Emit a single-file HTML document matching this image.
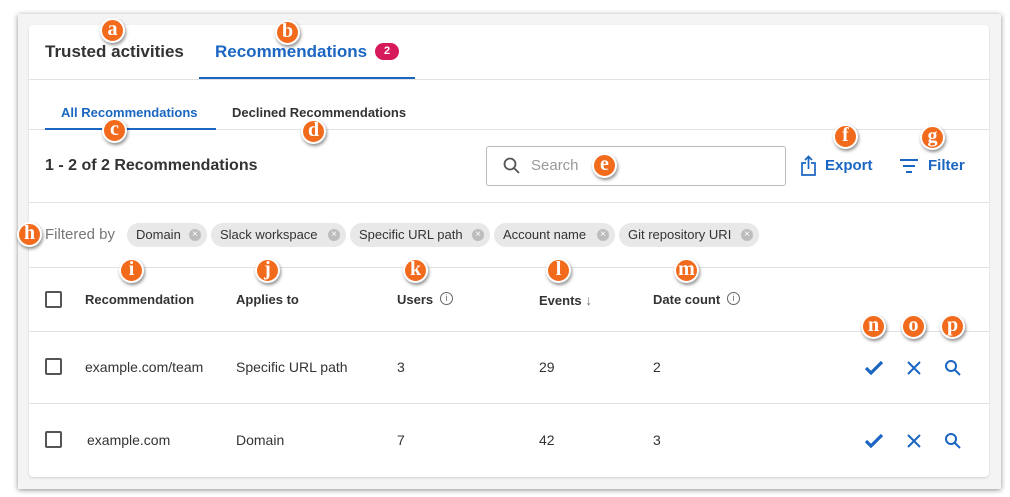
<!DOCTYPE html>
<html><head><style>
*{margin:0;padding:0;box-sizing:border-box}
body{width:1010px;height:497px;background:#fff;font-family:"Liberation Sans",sans-serif;position:relative;overflow:hidden;color:#333}
.frame{position:absolute;left:18px;top:14px;width:983px;height:475px;background:#f4f4f4;box-shadow:0 1px 5px rgba(0,0,0,.45)}
.card{position:absolute;left:29px;top:25px;width:960px;height:452px;background:#fff;border-radius:4px;box-shadow:0 1px 2px rgba(0,0,0,.15)}
.a{position:absolute;white-space:nowrap}
.hl{position:absolute;left:29px;width:960px;height:1px;background:#e2e2e2}
.chip{position:absolute;top:223px;height:24px;background:#e8e8e8;border-radius:12px;font-size:13px;line-height:24px;padding-left:9px;color:#333}
.chip i{position:absolute;right:6px;top:6px;width:12px;height:12px;border-radius:50%;background:#bdbdbd;color:#fff;font-style:normal;font-size:10px;line-height:12px;text-align:center}
.m{position:absolute;width:25px;height:25px;border-radius:50%;background:#f26b1d;border:2px solid #fff;box-shadow:1px 2px 3px rgba(0,0,0,.45);color:#fff;font-family:"Liberation Serif",serif;font-weight:bold;font-size:20px;line-height:19px;text-align:center}
.th{font-size:13px;font-weight:bold;color:#333;top:292px}
.td{font-size:14px;color:#333}
.cb{position:absolute;left:45px;width:17px;height:17px;border:2px solid #555;border-radius:2px}
.info{display:inline-block;width:13px;height:13px;border:1.3px solid #666;border-radius:50%;font-size:9px;line-height:11px;text-align:center;color:#666;vertical-align:middle;margin-left:7px;font-weight:normal;position:relative;top:-2px}
</style></head><body>
<div class="frame"></div>
<div class="card"></div>
<div class="a" style="left:45px;top:42px;font-size:17px;font-weight:bold;color:#333">Trusted activities</div>
<div class="a" style="left:215px;top:42px;font-size:17px;font-weight:bold;color:#1a66c2">Recommendations</div>
<div class="a" style="left:375px;top:43px;width:24px;height:17px;border-radius:9px;background:#d6195b;color:#fff;font-size:11px;font-weight:bold;text-align:center;line-height:17px">2</div>
<div class="hl" style="top:79px"></div>
<div class="a" style="left:199px;top:77px;width:216px;height:2px;background:#1a66c2"></div>
<div class="a" style="left:61px;top:105px;font-size:13px;font-weight:bold;color:#1a66c2">All Recommendations</div>
<div class="a" style="left:232px;top:105px;font-size:13px;font-weight:bold;color:#333">Declined Recommendations</div>
<div class="hl" style="top:129px"></div>
<div class="a" style="left:45px;top:128px;width:171px;height:2px;background:#1a66c2"></div>
<div class="a" style="left:45px;top:157px;font-size:16px;font-weight:bold;color:#333">1 - 2 of 2 Recommendations</div>
<div class="a" style="left:486px;top:146px;width:300px;height:40px;border:1px solid #bbb;border-radius:3px"></div>
<svg class="a" style="left:502px;top:156px" width="20" height="20" viewBox="0 0 20 20"><circle cx="8" cy="8" r="5.5" fill="none" stroke="#555" stroke-width="1.8"/><path d="M12 12l5 5" stroke="#555" stroke-width="1.8"/></svg>
<div class="a" style="left:531px;top:157px;font-size:15px;color:#999">Search</div>
<svg class="a" style="left:800px;top:155px" width="18" height="22" viewBox="0 0 18 22"><path d="M6 8H2v12h13V8h-4M8.5 14V2M5 5l3.5-3.5L12 5" fill="none" stroke="#1a66c2" stroke-width="1.7"/></svg>
<div class="a" style="left:825px;top:157px;font-size:15px;font-weight:bold;color:#1a66c2">Export</div>
<svg class="a" style="left:899px;top:158px" width="20" height="16" viewBox="0 0 20 16"><path d="M1 2h18M4 8h12M7 14h6" stroke="#1a66c2" stroke-width="2"/></svg>
<div class="a" style="left:928px;top:157px;font-size:15px;font-weight:bold;color:#1a66c2">Filter</div>
<div class="hl" style="top:202px"></div>
<div class="a" style="left:45px;top:226px;font-size:15px;color:#777">Filtered by</div>
<div class="chip" style="left:127px;width:80px">Domain<i>×</i></div>
<div class="chip" style="left:211px;width:135px">Slack workspace<i>×</i></div>
<div class="chip" style="left:350px;width:140px">Specific URL path<i>×</i></div>
<div class="chip" style="left:494px;width:121px">Account name<i>×</i></div>
<div class="chip" style="left:619px;width:140px">Git repository URI<i>×</i></div>
<div class="hl" style="top:267px"></div>
<div class="cb" style="top:291px"></div>
<div class="a th" style="left:85px">Recommendation</div>
<div class="a th" style="left:236px">Applies to</div>
<div class="a th" style="left:397px">Users<span class="info">i</span></div>
<div class="a th" style="left:539px">Events <span style="font-weight:normal;color:#777;font-size:14px">↓</span></div>
<div class="a th" style="left:653px">Date count<span class="info">i</span></div>
<div class="hl" style="top:331px"></div>
<div class="cb" style="top:358px"></div>
<div class="a td" style="left:85px;top:359px">example.com/team</div>
<div class="a td" style="left:236px;top:359px">Specific URL path</div>
<div class="a td" style="left:397px;top:359px">3</div>
<div class="a td" style="left:539px;top:359px">29</div>
<div class="a td" style="left:653px;top:359px">2</div>
<div class="hl" style="top:403px"></div>
<div class="cb" style="top:431px"></div>
<div class="a td" style="left:87px;top:432px">example.com</div>
<div class="a td" style="left:236px;top:432px">Domain</div>
<div class="a td" style="left:397px;top:432px">7</div>
<div class="a td" style="left:539px;top:432px">42</div>
<div class="a td" style="left:653px;top:432px">3</div>
<svg class="a" style="left:864px;top:358px" width="100" height="20" viewBox="0 0 100 20"><path d="M2 10l5 5L18 4" fill="none" stroke="#1a66c2" stroke-width="3.2"/><path d="M44 4l12 12M56 4L44 16" stroke="#1a66c2" stroke-width="2"/><circle cx="87" cy="8" r="5" fill="none" stroke="#1a66c2" stroke-width="2"/><path d="M91 12l5 5" stroke="#1a66c2" stroke-width="2"/></svg>
<svg class="a" style="left:864px;top:431px" width="100" height="20" viewBox="0 0 100 20"><path d="M2 10l5 5L18 4" fill="none" stroke="#1a66c2" stroke-width="3.2"/><path d="M44 4l12 12M56 4L44 16" stroke="#1a66c2" stroke-width="2"/><circle cx="87" cy="8" r="5" fill="none" stroke="#1a66c2" stroke-width="2"/><path d="M91 12l5 5" stroke="#1a66c2" stroke-width="2"/></svg>
<div class="m" style="left:100px;top:18px">a</div>
<div class="m" style="left:275px;top:20px">b</div>
<div class="m" style="left:102px;top:118px">c</div>
<div class="m" style="left:301px;top:119px">d</div>
<div class="m" style="left:592px;top:153px">e</div>
<div class="m" style="left:833px;top:124px">f</div>
<div class="m" style="left:920px;top:125px">g</div>
<div class="m" style="left:17px;top:222px">h</div>
<div class="m" style="left:119px;top:258px">i</div>
<div class="m" style="left:255px;top:258px">j</div>
<div class="m" style="left:403px;top:258px">k</div>
<div class="m" style="left:546px;top:258px">l</div>
<div class="m" style="left:674px;top:258px">m</div>
<div class="m" style="left:861px;top:314px">n</div>
<div class="m" style="left:901px;top:314px">o</div>
<div class="m" style="left:940px;top:314px">p</div>
</body></html>
